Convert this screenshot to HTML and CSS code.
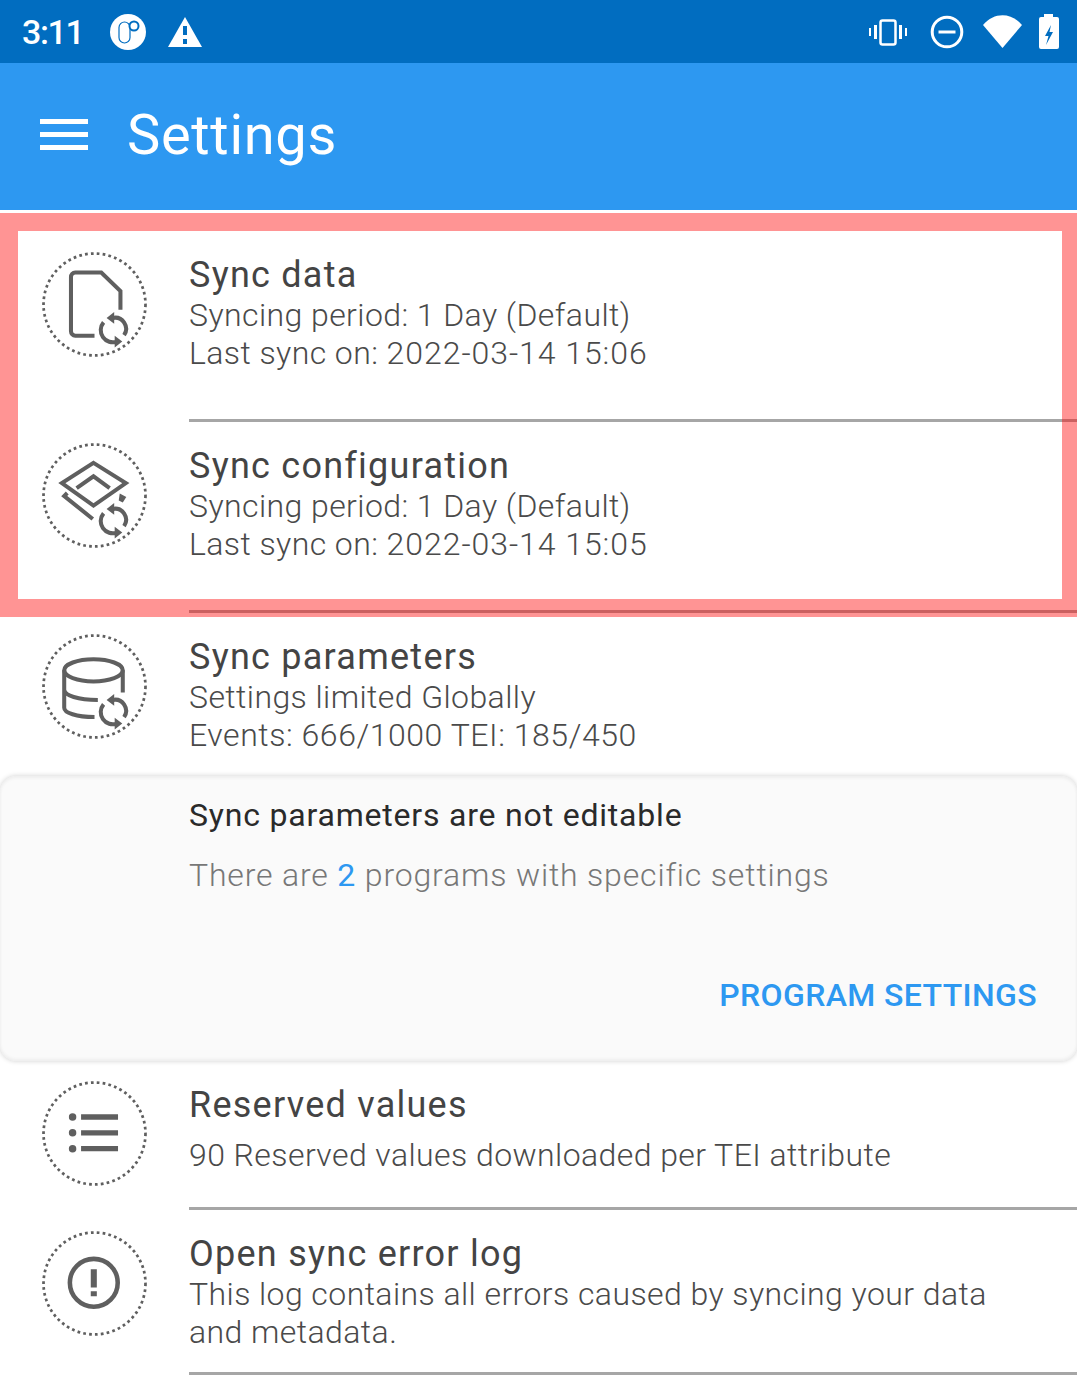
FILE: index.html
```html
<!DOCTYPE html>
<html lang="en">
<head>
    <meta charset="UTF-8">
    <title>Settings</title>
    <link rel="stylesheet" href="styles.css">
</head>
<body>
<svg class="defs" width="0" height="0">
    <symbol id="ring" viewBox="0 0 104 104">
        <circle cx="52" cy="52" r="50.500" fill="none" stroke="#5f5f5f" stroke-width="2.700" stroke-dasharray="2.700 3.150"/>
    </symbol>
    <symbol id="sync" viewBox="0 0 104 104">
        <path d="M70 65.300A11 11 0 0 1 81.300 82.300M61 69.700A12 12 0 0 0 74.300 88.700" fill="none" stroke="#5f5f5f" stroke-width="4"/>
        <path d="M64 65.300L71.500 59.500V71Z M79.500 88.700L72 83V94.500Z" fill="#5f5f5f"/>
    </symbol>
</svg>

<div id="status">
    <span class="time">3:11</span>
    <svg class="st-a" width="36" height="36" viewBox="0 0 36 36">
        <circle cx="18" cy="18" r="18" fill="#fff"/>
        <rect x="9" y="8" width="11" height="21" rx="5.500" fill="#fff" stroke="#016dc0" stroke-width="1.200"/>
        <circle cx="24" cy="12" r="5.500" fill="#016dc0"/>
        <circle cx="24" cy="12" r="3.500" fill="#fff"/>
    </svg>
    <svg class="st-b" width="36" height="32" viewBox="0 0 36 32">
        <path d="M18 1L35 31H1Z" fill="#fff"/>
        <path d="M16 10H20V19H16ZM16 23H20V28H16Z" fill="#016dc0"/>
    </svg>
    <div class="st-right">
        <svg class="st-vib" width="40" height="30" viewBox="0 0 40 30">
            <rect x="12.500" y="3.500" width="15" height="24" rx="2" fill="none" stroke="#fff" stroke-width="2.500"/>
            <path d="M1 11H3V19H1ZM6 8H9V22H6ZM31 8H34V22H31ZM37 11H39V19H37Z" fill="#fff"/>
        </svg>
        <svg class="st-dnd" width="34" height="34" viewBox="0 0 34 34">
            <circle cx="17" cy="17" r="14.800" fill="none" stroke="#fff" stroke-width="3"/>
            <path d="M8.500 15.500H25.500V18.500H8.500Z" fill="#fff"/>
        </svg>
        <svg class="st-wifi" width="39" height="33" viewBox="0 0 39 33">
            <path d="M19.500 33L0 10C11 -3 28 -3 39 10Z" fill="#fff"/>
        </svg>
        <svg width="20" height="35" viewBox="0 0 20 35">
            <path d="M5 0H14V3H18A2 2 0 0 1 20 5V33A2 2 0 0 1 18 35H2A2 2 0 0 1 0 33V5A2 2 0 0 1 2 3H5Z" fill="#fff"/>
            <path d="M12 11L6 22H9.500L7 31L14 18H10.500Z" fill="#016dc0"/>
        </svg>
    </div>
</div>

<div id="toolbar">
    <div class="menu"><i></i><i></i><i></i></div>
    <h1>Settings</h1>
</div>

<div id="list">
    <div class="row row-a">
        <svg class="ico" viewBox="0 0 104 104">
            <use href="#ring"/><use href="#sync"/>
            <path d="M52 83H33A4.500 4.500 0 0 1 28.700 78.500V25A4.500 4.500 0 0 1 33 20.300H58.700L77.700 38.700V57.300" fill="none" stroke="#5f5f5f" stroke-width="4"/>
        </svg>
        <div class="txt line">
            <h2>Sync data</h2>
            <p>Syncing period: 1 Day (Default)</p>
            <p>Last sync on: <span class="dg">2022-03-14 15:06</span></p>
        </div>
    </div>
    <div class="row row-a">
        <svg class="ico" viewBox="0 0 104 104">
            <use href="#ring"/><use href="#sync"/>
            <path d="M51 19.700L83 39.700L51 62L19.700 39.700ZM34.300 44.700L51 33L67 44.700M25 49.500L22 52.500L50.300 75.300" fill="none" stroke="#5f5f5f" stroke-width="4"/>
            <path d="M77 50L83.500 53.500L80 59L76 57Z" fill="#5f5f5f"/>
        </svg>
        <div class="txt line">
            <h2>Sync configuration</h2>
            <p>Syncing period: 1 Day (Default)</p>
            <p>Last sync on: <span class="dg">2022-03-14 15:05</span></p>
        </div>
    </div>
    <div class="row row-b">
        <svg class="ico" viewBox="0 0 104 104">
            <use href="#ring"/><use href="#sync"/>
            <ellipse cx="51" cy="36" rx="29" ry="11" fill="none" stroke="#5f5f5f" stroke-width="4"/>
            <path d="M22 36V73C22 78 34 82.300 52 82.300M22 55C22 61 36 65.300 55.300 65.300M80 36V58" fill="none" stroke="#5f5f5f" stroke-width="4"/>
        </svg>
        <div class="txt">
            <h2>Sync parameters</h2>
            <p>Settings limited Globally</p>
            <p class="num2">Events: 666/1000 TEI: 185/450</p>
        </div>
    </div>
    <div class="card">
        <h3>Sync parameters are not editable</h3>
        <p>There are <span>2</span> programs with specific settings</p>
        <a>PROGRAM SETTINGS</a>
    </div>
    <div class="row row-c">
        <svg class="ico" viewBox="0 0 104 104">
            <use href="#ring"/>
            <circle cx="30.300" cy="35.700" r="3.700" fill="#5f5f5f"/>
            <circle cx="30.300" cy="51.300" r="3.700" fill="#5f5f5f"/>
            <circle cx="30.300" cy="67" r="3.700" fill="#5f5f5f"/>
            <path d="M38.700 33H75.300V38.500H38.700ZM38.700 48.700H75.300V54H38.700ZM38.700 64.300H75.300V69.700H38.700Z" fill="#5f5f5f"/>
        </svg>
        <div class="txt line">
            <h2>Reserved values</h2>
            <p class="gap">90 Reserved values downloaded per TEI attribute</p>
        </div>
    </div>
    <div class="row row-d">
        <svg class="ico" viewBox="0 0 104 104">
            <use href="#ring"/>
            <circle cx="51.300" cy="51.300" r="23.700" fill="none" stroke="#5f5f5f" stroke-width="4.500"/>
            <path d="M48.300 38H54.300V56H48.300ZM48.300 59.700H54.300V64.700H48.300Z" fill="#5f5f5f"/>
        </svg>
        <div class="txt line">
            <h2>Open sync error log</h2>
            <p>This log contains all errors caused by syncing your data</p>
            <p>and metadata.</p>
        </div>
    </div>
</div>

<div id="highlight"></div>
</body>
</html>
```

FILE: styles.css
```css
*{
    margin: 0;
    padding: 0;
    box-sizing: border-box;
}
html, body{
    height: 1377px;
    overflow: hidden;
}
body{
    background-color: #fff;
    font-family: Roboto, "Liberation Sans", sans-serif;
    position: relative;
}
.defs{
    position: absolute;
}
#status{
    height: 63px;
    background-color: #016dc0;
    color: #fff;
    display: flex;
    align-items: center;
    padding: 0 18px 0 22px;
}
#status .time{
    font-size: 34px;
    font-weight: 500;
    letter-spacing: -1.4px;
    width: 88px;
}
#status .st-a{
    margin-right: 21px;
}
.st-right{
    margin-left: auto;
    display: flex;
    align-items: center;
}
.st-vib{
    margin-right: 22px;
}
.st-dnd{
    margin-right: 19px;
}
.st-wifi{
    margin-right: 17px;
}
#toolbar{
    height: 147px;
    background-color: #2d98f1;
    color: #fff;
    display: flex;
    align-items: center;
    padding: 0 0 4px 40px;
}
.menu{
    width: 48px;
    display: flex;
    flex-direction: column;
    gap: 8px;
    margin-right: 39px;
}
.menu i{
    display: block;
    height: 5px;
    background-color: #fff;
}
#toolbar h1{
    font-size: 56px;
    font-weight: 400;
    letter-spacing: 0.7px;
}
#list{
    padding-top: 20px;
}
.row{
    display: flex;
    padding-left: 42px;
}
.row-a{
    height: 191px;
}
.row-b{
    height: 164px;
}
.row-c{
    height: 149px;
}
.row-d{
    height: 165px;
}
.ico{
    width: 105px;
    height: 105px;
    flex: none;
    margin-top: 22px;
    margin-right: 42px;
}
.txt{
    flex: 1;
    padding-top: 25px;
}
.line{
    border-bottom: 3px solid #a6a6a6;
}
.row-a .txt{
    height: 192px;
}
h2{
    font-size: 36px;
    font-weight: 400;
    line-height: 41px;
    letter-spacing: 1.25px;
    color: #444;
}
.txt p{
    font-size: 32px;
    font-weight: 300;
    line-height: 38px;
    letter-spacing: 0.42px;
    color: #4a4a4a;
}
.txt .dg{
    letter-spacing: 0.95px;
}
.txt .num2{
    letter-spacing: 0.55px;
}
.row-c .ico{
    margin-top: 20px;
}
.row-c .txt{
    padding-top: 24px;
}
.txt .gap{
    margin-top: 10px;
}
.row-d .ico{
    margin-top: 21px;
}
.row-d .txt{
    padding-top: 24px;
}
.card{
    height: 285px;
    background-color: #fafafa;
    border-radius: 16px;
    box-shadow: 0 0 5px #cfcfcf, inset 0 2px 3px #eee, inset 0 -2px 3px #eee;
    padding: 19px 40px 0 189px;
    display: flex;
    flex-direction: column;
}
.card h3{
    font-size: 32px;
    font-weight: 400;
    line-height: 40px;
    letter-spacing: 0.8px;
    color: #2a2a2a;
}
.card p{
    font-size: 32px;
    font-weight: 300;
    line-height: 40px;
    letter-spacing: 0.83px;
    color: #777;
    margin-top: 20px;
}
.card p span{
    color: #2d98f1;
    font-weight: 400;
}
.card a{
    font-size: 32px;
    font-weight: 500;
    letter-spacing: 0.38px;
    color: #2d98f1;
    align-self: flex-end;
    margin-top: 81px;
}
#highlight{
    position: absolute;
    left: 0;
    top: 213px;
    width: 1077px;
    height: 404px;
    border: solid rgba(255, 0, 0, 0.42);
    border-width: 18px 15px 18px 18px;
}
```
